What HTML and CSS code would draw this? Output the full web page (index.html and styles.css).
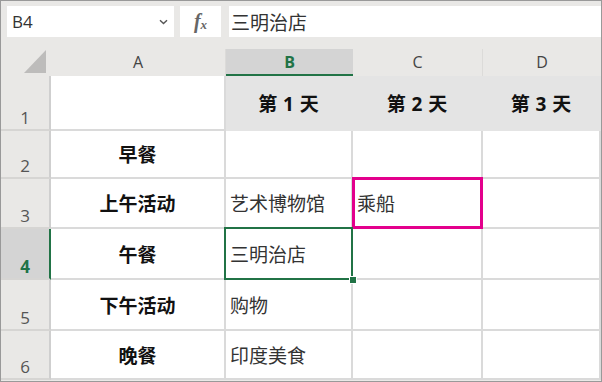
FILE: index.html
```html
<!DOCTYPE html>
<html lang="zh-CN">
<head>
    <meta charset="UTF-8">
    <meta name="viewport" content="width=device-width, initial-scale=1.0">
    <title>三明治店</title>
    <link rel="stylesheet" href="styles.css">
</head>
<body>
    <div class="window">
        <div class="toolbar">
            <div class="name-box">
                <span>B4</span>
                <svg class="chevron" width="9" height="6" viewBox="0 0 9 6"><path d="M1 1.2 L4.5 4.6 L8 1.2" fill="none" stroke="#555" stroke-width="1.4"/></svg>
            </div>
            <div class="fx-box"><span class="fx-f">f</span><span class="fx-x">x</span></div>
            <div class="formula">三明治店</div>
        </div>

        <div class="sheet">
            <!-- column headers -->
            <div class="corner">
                <svg width="22" height="23" viewBox="0 0 22 23"><polygon points="0,23 22,0 22,23" fill="#bdbcbb"/></svg>
            </div>
            <div class="col-head">A</div>
            <div class="col-head current">B</div>
            <div class="col-head">C</div>
            <div class="col-head last">D</div>

            <!-- row 1 -->
            <div class="row-head">1</div>
            <div class="cell label"></div>
            <div class="cell day">第 1 天</div>
            <div class="cell day">第 2 天</div>
            <div class="cell day">第 3 天</div>

            <!-- row 2 -->
            <div class="row-head">2</div>
            <div class="cell label">早餐</div>
            <div class="cell"></div>
            <div class="cell"></div>
            <div class="cell"></div>

            <!-- row 3 -->
            <div class="row-head">3</div>
            <div class="cell label">上午活动</div>
            <div class="cell">艺术博物馆</div>
            <div class="cell marked">乘船</div>
            <div class="cell"></div>

            <!-- row 4 -->
            <div class="row-head current">4</div>
            <div class="cell label">午餐</div>
            <div class="cell active">三明治店<span class="handle"></span></div>
            <div class="cell"></div>
            <div class="cell"></div>

            <!-- row 5 -->
            <div class="row-head">5</div>
            <div class="cell label">下午活动</div>
            <div class="cell">购物</div>
            <div class="cell"></div>
            <div class="cell"></div>

            <!-- row 6 -->
            <div class="row-head">6</div>
            <div class="cell label">晚餐</div>
            <div class="cell">印度美食</div>
            <div class="cell"></div>
            <div class="cell"></div>
        </div>
    </div>
</body>
</html>
```

FILE: styles.css
```css
* {
    box-sizing: border-box;
}
body {
    margin: 0;
    font-family: "Open Sans", "Noto Sans CJK SC", sans-serif;
    color: #333;
}
.window {
    width: 602px;
    height: 382px;
    border: 1px solid #999;
    background: #e9e8e6;
    overflow: hidden;
}
.toolbar {
    display: flex;
    height: 48px;
    padding: 5px 0 12px 6px;
}
.name-box {
    width: 167px;
    margin-right: 6px;
    background: #fff;
    display: flex;
    align-items: center;
    justify-content: space-between;
    padding: 0 6px 0 5px;
    font-size: 17px;
    color: #333;
}
.chevron {
    margin-top: 1px;
}
.fx-box {
    width: 41px;
    margin-right: 8px;
    background: #fff;
    display: flex;
    align-items: center;
    justify-content: center;
    font-family: "Liberation Serif", serif;
    font-style: italic;
    font-weight: bold;
    color: #666;
}
.fx-f {
    font-size: 20px;
}
.fx-x {
    font-size: 13px;
    margin-top: 6px;
}
.formula {
    flex: 1;
    background: #fff;
    display: flex;
    align-items: center;
    padding-left: 2px;
    font-size: 19px;
    color: #333;
}
.sheet {
    display: grid;
    grid-template-columns: 50px 175px 127px 130px 118px;
    grid-template-rows: 27px 55px 48px 50px 51px 51px 49px;
}
.corner {
    display: flex;
    align-items: flex-end;
    justify-content: flex-end;
    padding: 0 3px 3px 0;
    border-right: 2px solid #e9e8e6;
}
.col-head {
    display: flex;
    align-items: center;
    justify-content: center;
    font-size: 16px;
    color: #444;
    border-right: 1px solid #dcdbd9;
    padding-bottom: 2px;
}
.col-head.last {
    border-right: none;
}
.col-head.current {
    background: #d4d4d4;
    color: #217346;
    font-weight: bold;
    border-bottom: 2px solid #217346;
    border-right: none;
    padding-bottom: 0;
}
.row-head {
    display: flex;
    align-items: flex-end;
    justify-content: center;
    padding-bottom: 0;
    font-size: 17px;
    color: #555;
    border-bottom: 2px solid #d6d5d3;
    border-right: 2px solid #cfcfcf;
}
.row-head.current {
    background: #d4d4d4;
    color: #217346;
    font-weight: bold;
    border-right: 2px solid #217346;
}
.cell {
    position: relative;
    display: flex;
    align-items: center;
    padding-left: 4px;
    background: #fff;
    font-size: 19px;
    color: #333;
    white-space: nowrap;
    border-right: 2px solid #dadada;
    border-bottom: 2px solid #dadada;
}
.cell.label {
    justify-content: center;
    padding-left: 0;
    font-weight: bold;
    color: #111;
}
.cell.day {
    justify-content: center;
    padding-left: 0;
    background: #e4e4e4;
    font-weight: bold;
    color: #111;
    word-spacing: 1px;
    border-right-color: #e4e4e4;
    border-bottom-color: #e4e4e4;
}
.cell.active::after {
    content: "";
    position: absolute;
    top: -2px;
    left: -2px;
    right: -2px;
    bottom: -2px;
    border: 2px solid #217346;
    z-index: 2;
}
.cell.marked::after {
    content: "";
    position: absolute;
    top: -2px;
    left: -1px;
    right: -2px;
    bottom: -2px;
    border: 3px solid #e3008c;
    z-index: 2;
}
.handle {
    position: absolute;
    right: -6px;
    bottom: -6px;
    width: 8px;
    height: 8px;
    background: #217346;
    border: 1px solid #fff;
    z-index: 3;
}
```
